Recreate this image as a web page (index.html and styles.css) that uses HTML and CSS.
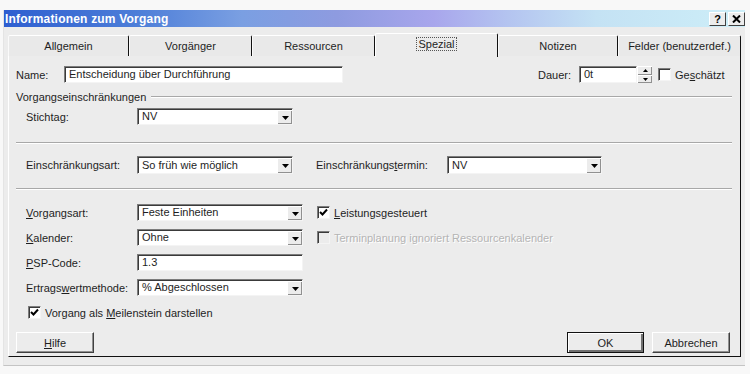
FILE: index.html
```html
<!DOCTYPE html>
<html lang="de">
<head>
    <meta charset="UTF-8">
    <title>Informationen zum Vorgang</title>
    <link rel="stylesheet" href="styles.css">
</head>
<body>

<div class="window">
    <!-- Title bar -->
    <div class="titlebar">
        <span class="title">Informationen zum Vorgang</span>
        <span class="tb-btn">?</span>
        <span class="tb-btn tb-close">
            <svg width="9" height="8" viewBox="0 0 9 8"><path d="M1 0.5 L8 7.5 M8 0.5 L1 7.5" stroke="#000" stroke-width="2"/></svg>
        </span>
    </div>

    <!-- Tabs -->
    <div class="tabs">
        <div class="tab">Allgemein</div>
        <div class="tab">Vorgänger</div>
        <div class="tab">Ressourcen</div>
        <div class="tab active"><span class="focus">Spezial</span></div>
        <div class="tab">Notizen</div>
        <div class="tab">Felder (benutzerdef.)</div>
    </div>

    <div class="panel">
        <!-- Name / Dauer -->
        <div class="row name-row">
            <label class="lbl-name">Name:</label>
            <div class="field name-field">Entscheidung über Durchführung</div>
            <label class="lbl-dauer">Dauer:</label>
            <div class="field dauer-field">0t</div>
            <div class="spinner">
                <span class="spin-btn"><svg width="5" height="3" viewBox="0 0 5 3"><path d="M2.5 0 L5 3 L0 3 Z" fill="#000"/></svg></span>
                <span class="spin-btn"><svg width="5" height="3" viewBox="0 0 5 3"><path d="M0 0 L5 0 L2.5 3 Z" fill="#000"/></svg></span>
            </div>
            <span class="check dauer-check"></span>
            <span class="check-text">Ge<u>s</u>chätzt</span>
        </div>

        <!-- Group -->
        <div class="group-head">
            <span>Vorgangseinschränkungen</span>
            <span class="group-line"></span>
        </div>

        <div class="row stich-row">
            <label class="lbl">Stichtag:</label>
            <div class="field select sel-short">NV<span class="drop"><svg width="7" height="4" viewBox="0 0 7 4"><path d="M0 0 L7 0 L3.5 4 Z" fill="#000"/></svg></span></div>
        </div>

        <div class="sep"></div>

        <div class="row constraint-row">
            <label class="lbl">Einschränkungsart:</label>
            <div class="field select sel-short">So früh wie möglich<span class="drop"><svg width="7" height="4" viewBox="0 0 7 4"><path d="M0 0 L7 0 L3.5 4 Z" fill="#000"/></svg></span></div>
            <label class="lbl-termin">Einschränkungs<u>t</u>ermin:</label>
            <div class="field select sel-termin">NV<span class="drop"><svg width="7" height="4" viewBox="0 0 7 4"><path d="M0 0 L7 0 L3.5 4 Z" fill="#000"/></svg></span></div>
        </div>

        <div class="sep sep-second"></div>

        <!-- Lower section -->
        <div class="grid">
            <label class="lbl"><u>V</u>organgsart:</label>
            <div class="field select">Feste Einheiten<span class="drop"><svg width="7" height="4" viewBox="0 0 7 4"><path d="M0 0 L7 0 L3.5 4 Z" fill="#000"/></svg></span></div>
            <div class="check-row">
                <span class="check checked"><svg width="9" height="9" viewBox="0 0 9 9"><path d="M1 4 L3.5 6.5 L8 1.5" stroke="#000" stroke-width="2" fill="none"/></svg></span>
                <span class="check-text"><u>L</u>eistungsgesteuert</span>
            </div>

            <label class="lbl"><u>K</u>alender:</label>
            <div class="field select">Ohne<span class="drop"><svg width="7" height="4" viewBox="0 0 7 4"><path d="M0 0 L7 0 L3.5 4 Z" fill="#000"/></svg></span></div>
            <div class="check-row disabled">
                <span class="check"></span>
                <span class="check-text">Terminplanung ignoriert Ressourcenkalender</span>
            </div>

            <label class="lbl"><u>P</u>SP-Code:</label>
            <div class="field">1.3</div>
            <div></div>

            <label class="lbl">Ertrags<u>w</u>ertmethode:</label>
            <div class="field select">% Abgeschlossen<span class="drop"><svg width="7" height="4" viewBox="0 0 7 4"><path d="M0 0 L7 0 L3.5 4 Z" fill="#000"/></svg></span></div>
            <div></div>
        </div>

        <div class="check-row milestone">
            <span class="check checked"><svg width="9" height="9" viewBox="0 0 9 9"><path d="M1 4 L3.5 6.5 L8 1.5" stroke="#000" stroke-width="2" fill="none"/></svg></span>
            <span class="check-text">Vorgang als <u>M</u>eilenstein darstellen</span>
        </div>

        <!-- Buttons -->
        <div class="buttons">
            <button class="btn"><u>H</u>ilfe</button>
            <span class="spacer"></span>
            <button class="btn btn-default">OK</button>
            <button class="btn">Abbrechen</button>
        </div>
    </div>
</div>

</body>
</html>
```

FILE: styles.css
```css
body {
    margin: 0;
    padding: 0;
    background-color: #f8f8f8;
    font-family: "Liberation Sans", Arial, sans-serif;
    font-size: 11px;
    color: #1e1e1e;
}
.window {
    width: 742px;
    margin: 10px 0 0 3px;
    padding-bottom: 8px;
    background-color: #ececec;
    border-bottom: 1px solid #c4c4c4;
    border-left: 1px solid #e4e4e4;
    box-sizing: border-box;
}
.titlebar {
    height: 17px;
    display: flex;
    align-items: center;
    padding-left: 1px;
    background: linear-gradient(to right, #2e5ed0 0%, #4d7ed8 18%, #7a9fe2 32%, #8e9be0 45%, #a8a6ec 58%, #b4c4f0 68%, #c4e2f4 80%, #cdeef8 100%);
}
.title {
    flex: 1;
    color: #fff;
    font-weight: bold;
    font-size: 12px;
    letter-spacing: 0.2px;
}
.tb-btn {
    width: 15px;
    height: 12px;
    margin-left: 2px;
    display: flex;
    align-items: center;
    justify-content: center;
    background-color: #ececec;
    border: 1px solid;
    border-color: #fff #404040 #404040 #fff;
    font-weight: bold;
    font-size: 11px;
    color: #000;
}
.tabs {
    display: grid;
    grid-template-columns: 121px 123px 123px 123px 120px 123px;
    margin: 6px 0 0 4px;
    height: 22px;
    align-items: end;
}
.tab {
    height: 21px;
    line-height: 20px;
    text-align: center;
    border-top: 1px solid #fff;
    border-left: 1px solid #fafafa;
    border-right: 1px solid #111;
    border-radius: 2px 2px 0 0;
    box-sizing: border-box;
    background-color: #e9e9e9;
}
.tab.active {
    height: 24px;
    margin-bottom: -1px;
    border-left: 1px solid #fff;
    background-color: #ececec;
    position: relative;
}
.focus {
    border: 1px dotted #555;
    padding: 0 1px;
}
.panel {
    margin-left: 4px;
    width: 733px;
    border-top: 1px solid #fff;
    border-left: 1px solid #fff;
    border-right: 1px solid #111;
    border-bottom: 1px solid #111;
    box-sizing: border-box;
    padding: 0 8px 3px 7px;
}
.row {
    display: flex;
    align-items: center;
}
.field {
    height: 17px;
    line-height: 15px;
    box-sizing: border-box;
    background-color: #fff;
    border: 1px solid;
    border-color: #7c7c7c #f4f4f4 #f4f4f4 #7c7c7c;
    box-shadow: inset 1px 1px 0 #3a3a3a;
    padding-left: 4px;
    white-space: nowrap;
    position: relative;
}
.select {
    padding-right: 18px;
}
.drop {
    position: absolute;
    right: 0;
    top: 1px;
    bottom: 0;
    width: 15px;
    display: flex;
    align-items: center;
    justify-content: center;
    background-color: #ececec;
    border-left: 1px solid #fff;
    border-top: 1px solid #fff;
    box-sizing: border-box;
    box-shadow: inset -1px -1px 0 #909090;
}
.name-row {
    margin-top: 10px;
}
.lbl-name {
    width: 48px;
}
.name-field {
    width: 279px;
}
.lbl-dauer {
    margin-left: 195px;
    width: 41px;
}
.dauer-field {
    width: 58px;
}
.spinner {
    width: 15px;
    height: 17px;
    display: flex;
    flex-direction: column;
}
.spin-btn {
    flex: 1;
    display: flex;
    align-items: center;
    justify-content: center;
    background-color: #ececec;
    border-top: 1px solid #fff;
    border-left: 1px solid #fff;
    box-shadow: inset -1px -1px 0 #909090;
}
.check {
    width: 13px;
    height: 13px;
    box-sizing: border-box;
    background-color: #fff;
    border: 1px solid;
    border-color: #7c7c7c #f4f4f4 #f4f4f4 #7c7c7c;
    box-shadow: inset 1px 1px 0 #3a3a3a;
    display: flex;
    align-items: center;
    justify-content: center;
    flex-shrink: 0;
}
.check-text {
    margin-left: 4px;
    white-space: nowrap;
}
.dauer-check {
    margin-left: 6px;
}
.group-head {
    margin-top: 7px;
    height: 14px;
    display: flex;
    align-items: center;
}
.group-line {
    flex: 1;
    margin-left: 5px;
    border-top: 1px solid #a8a8a8;
    border-bottom: 1px solid #fff;
}
.stich-row {
    margin-top: 4px;
}
.lbl {
    width: 121px;
    padding-left: 10px;
    box-sizing: border-box;
    white-space: nowrap;
}
.sel-short {
    width: 156px;
}
.sep {
    margin-top: 17px;
    border-top: 1px solid #a8a8a8;
    border-bottom: 1px solid #fff;
}
.constraint-row {
    margin-top: 12px;
}
.constraint-row .field {
    height: 18px;
    line-height: 16px;
}
.lbl-termin {
    margin-left: 23px;
    width: 131px;
}
.sel-termin {
    width: 155px;
}
.sep-second {
    margin-top: 14px;
}
.grid {
    margin-top: 14px;
    display: grid;
    grid-template-columns: 121px 166px 1fr;
    grid-auto-rows: 17px;
    row-gap: 8px;
    align-items: center;
}
.check-row {
    display: flex;
    align-items: center;
    margin-left: 14px;
}
.check-row.disabled .check {
    background-color: #ececec;
}
.check-row.disabled .check-text {
    color: #b4b4b4;
    text-shadow: 1px 1px 0 #fff;
}
.milestone {
    margin: 10px 0 0 12px;
}
.buttons {
    display: flex;
    margin-top: 13px;
    padding-right: 2px;
}
.spacer {
    flex: 1;
}
.btn {
    width: 78px;
    height: 21px;
    padding: 0;
    font-family: "Liberation Sans", Arial, sans-serif;
    font-size: 11px;
    color: #1e1e1e;
    background-color: #ececec;
    border: 1px solid;
    border-color: #fff #404040 #404040 #fff;
    box-shadow: inset -1px -1px 0 #909090;
    margin-left: 8px;
}
.btn:first-child {
    margin-left: 0;
}
.btn-default {
    width: 77px;
    border-color: #111;
    box-shadow: inset 1px 1px 0 #fff, inset -2px -2px 0 #707070;
}
```
